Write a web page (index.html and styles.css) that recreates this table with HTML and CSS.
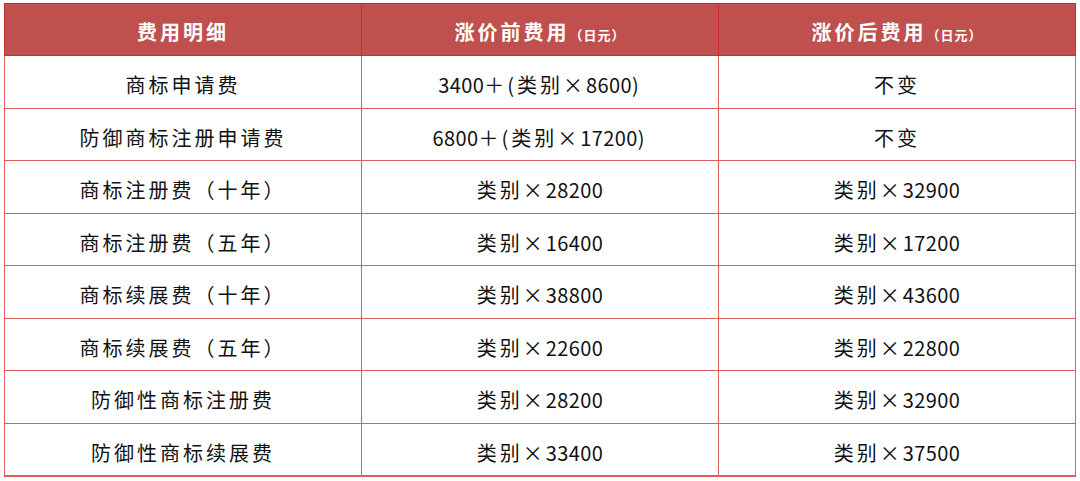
FILE: index.html
```html
<!DOCTYPE html>
<html lang="zh">
<head>
<meta charset="utf-8">
<link rel="stylesheet" href="styles.css">
</head>
<body>
<table class="fees">
  <colgroup>
    <col class="c1"><col class="c2"><col class="c3">
  </colgroup>
  <thead>
    <tr>
      <th>费用明细</th>
      <th>涨价前费用<span class="unit">（日元）</span></th>
      <th>涨价后费用<span class="unit">（日元）</span></th>
    </tr>
  </thead>
  <tbody>
    <tr><td>商标申请费</td><td><span class="num">3400</span>＋(类别×<span class="num">8600</span>)</td><td>不变</td></tr>
    <tr><td>防御商标注册申请费</td><td><span class="num">6800</span>＋(类别×<span class="num">17200</span>)</td><td>不变</td></tr>
    <tr><td>商标注册费（十年）</td><td>类别×<span class="num">28200</span></td><td>类别×<span class="num">32900</span></td></tr>
    <tr><td>商标注册费（五年）</td><td>类别×<span class="num">16400</span></td><td>类别×<span class="num">17200</span></td></tr>
    <tr><td>商标续展费（十年）</td><td>类别×<span class="num">38800</span></td><td>类别×<span class="num">43600</span></td></tr>
    <tr><td>商标续展费（五年）</td><td>类别×<span class="num">22600</span></td><td>类别×<span class="num">22800</span></td></tr>
    <tr><td>防御性商标注册费</td><td>类别×<span class="num">28200</span></td><td>类别×<span class="num">32900</span></td></tr>
    <tr><td>防御性商标续展费</td><td>类别×<span class="num">33400</span></td><td>类别×<span class="num">37500</span></td></tr>
  </tbody>
</table>
</body>
</html>
```
FILE: styles.css
```css
html, body {
  margin: 0;
  padding: 0;
  background: #ffffff;
}
body {
  padding: 3px 0 0 4px;
  font-family: "Noto Sans CJK SC", "Noto Sans", sans-serif;
}
.fees {
  border-collapse: collapse;
  table-layout: fixed;
  width: 1071px;
}
.c1 { width: 357px; }
.c2 { width: 357px; }
.c3 { width: 357px; }
.fees th,
.fees td {
  border: 1px solid #e05d5d;
  text-align: center;
  vertical-align: middle;
}
.fees thead tr {
  height: 52px;
}
.fees th {
  background: #c0504d;
  color: #ffffff;
  font-weight: 700;
  font-size: 20px;
  letter-spacing: 3px;
  padding: 3px 0 0;
  border-color: #c62d2d;
}
.fees .unit {
  font-size: 13px;
  letter-spacing: 1px;
  font-weight: 700;
}
.fees tbody tr {
  height: 52.5px;
}
.fees td {
  color: #111111;
  font-size: 20px;
  letter-spacing: 3px;
  line-height: 1;
  padding: 7px 0 0;
}
.fees .num {
  letter-spacing: 0.4px;
}
.fees tbody tr:last-child td {
  border-bottom: 2px solid #e05d5d;
}
```
